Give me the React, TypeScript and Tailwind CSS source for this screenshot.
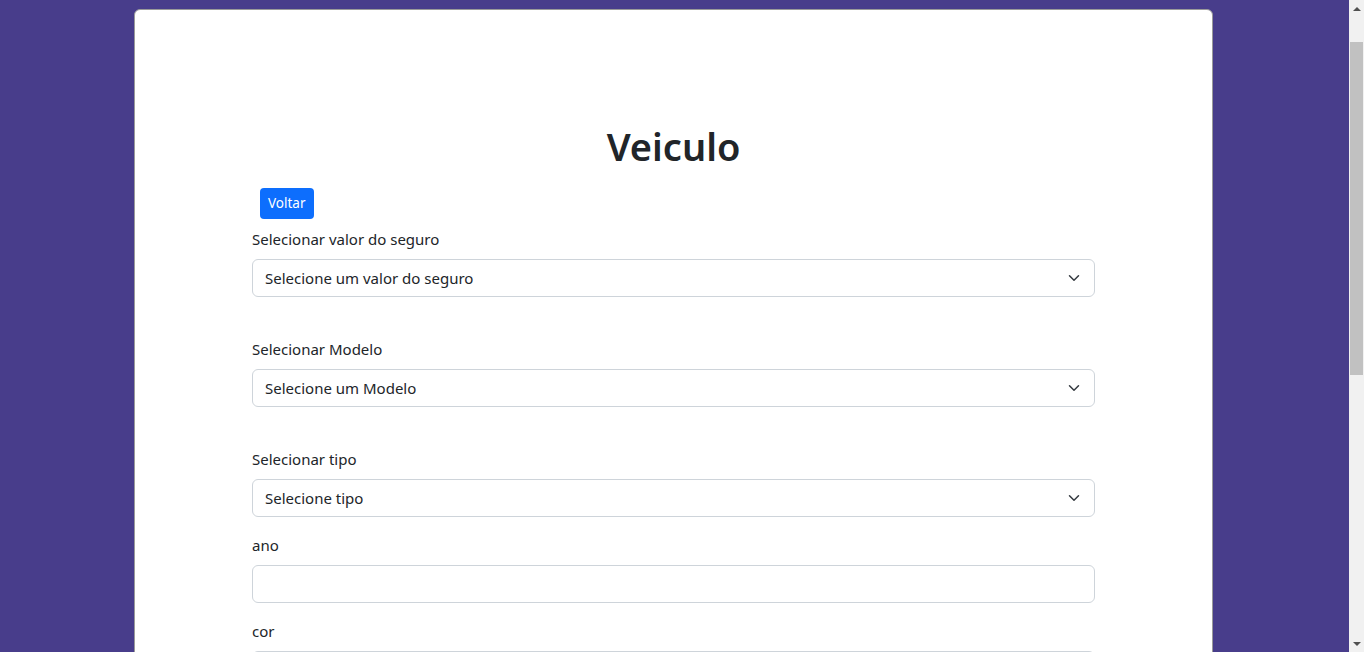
interface FieldProps {
  label: string
  placeholder?: string
  select?: boolean
  className?: string
}

function Chevron() {
  return (
    <svg
      className="pointer-events-none absolute right-[13px] top-1/2 h-[12px] w-[16px] -translate-y-1/2"
      viewBox="0 0 16 16"
      fill="none"
      stroke="#343a40"
      strokeWidth={2}
      strokeLinecap="round"
      strokeLinejoin="round"
      aria-hidden="true"
    >
      <path d="m2 5 6 6 6-6" />
    </svg>
  )
}

function Field({ label, placeholder, select, className = '' }: FieldProps) {
  return (
    <div className={className}>
      <label className="mb-2 block text-[15px] leading-6 text-[#212529]">{label}</label>
      {select ? (
        <div className="relative">
          <div className="h-[38px] w-full rounded-[6px] border border-[#ced4da] bg-white pl-[12px] pr-[36px] text-[15px] leading-[36px] text-[#212529]">
            {placeholder}
          </div>
          <Chevron />
        </div>
      ) : (
        <input
          type="text"
          className="block h-[38px] w-full rounded-[6px] border border-[#ced4da] bg-white px-[12px] text-[15px] text-[#212529] outline-none"
        />
      )}
    </div>
  )
}

// fake window scrollbar, as in the screenshot
function Scrollbar() {
  return (
    <div className="fixed right-0 top-0 flex h-screen w-[15px] flex-col items-center bg-[#f1f1f1]">
      <div className="flex h-[17px] w-full items-center justify-center">
        <div className="h-0 w-0 border-x-[4px] border-b-[4px] border-x-transparent border-b-[#505050]" />
      </div>
      <div className="mt-[25px] h-[333px] w-[13px] bg-[#c1c1c1]" />
      <div className="flex-1" />
      <div className="flex h-[17px] w-full items-center justify-center">
        <div className="h-0 w-0 border-x-[4px] border-t-[4px] border-x-transparent border-t-[#505050]" />
      </div>
    </div>
  )
}

export default function App() {
  return (
    <div
      className="min-h-screen bg-[#483d8b] pt-[9px] pr-[17px] pb-10"
      style={{ fontFamily: '"Noto Sans", "Open Sans", sans-serif' }}
    >
      <div className="mx-auto w-[1079px] rounded-[6px] border border-[#9a9a9a] bg-white pt-[112px] pb-16">
        <div className="mx-auto w-[843px]">
          <h1 className="mb-[10px] text-center text-[38px] font-semibold leading-[48px] text-[#212529]">
            Veiculo
          </h1>
          <button className="m-2 h-[31px] rounded-[4px] bg-[#0d6efd] px-2 text-[13.5px] text-white">
            Voltar
          </button>
          <Field label="Selecionar valor do seguro" placeholder="Selecione um valor do seguro" select />
          <Field className="mt-[40px]" label="Selecionar Modelo" placeholder="Selecione um Modelo" select />
          <Field className="mt-[40px]" label="Selecionar tipo" placeholder="Selecione tipo" select />
          <Field className="mt-[16px]" label="ano" />
          <Field className="mt-[16px]" label="cor" />
          <Field className="mt-[16px]" label="placa" />
          <button className="mt-6 rounded-[6px] bg-[#0d6efd] px-3 py-[6px] text-[15px] text-white">
            Salvar
          </button>
        </div>
      </div>
      <Scrollbar />
    </div>
  )
}
